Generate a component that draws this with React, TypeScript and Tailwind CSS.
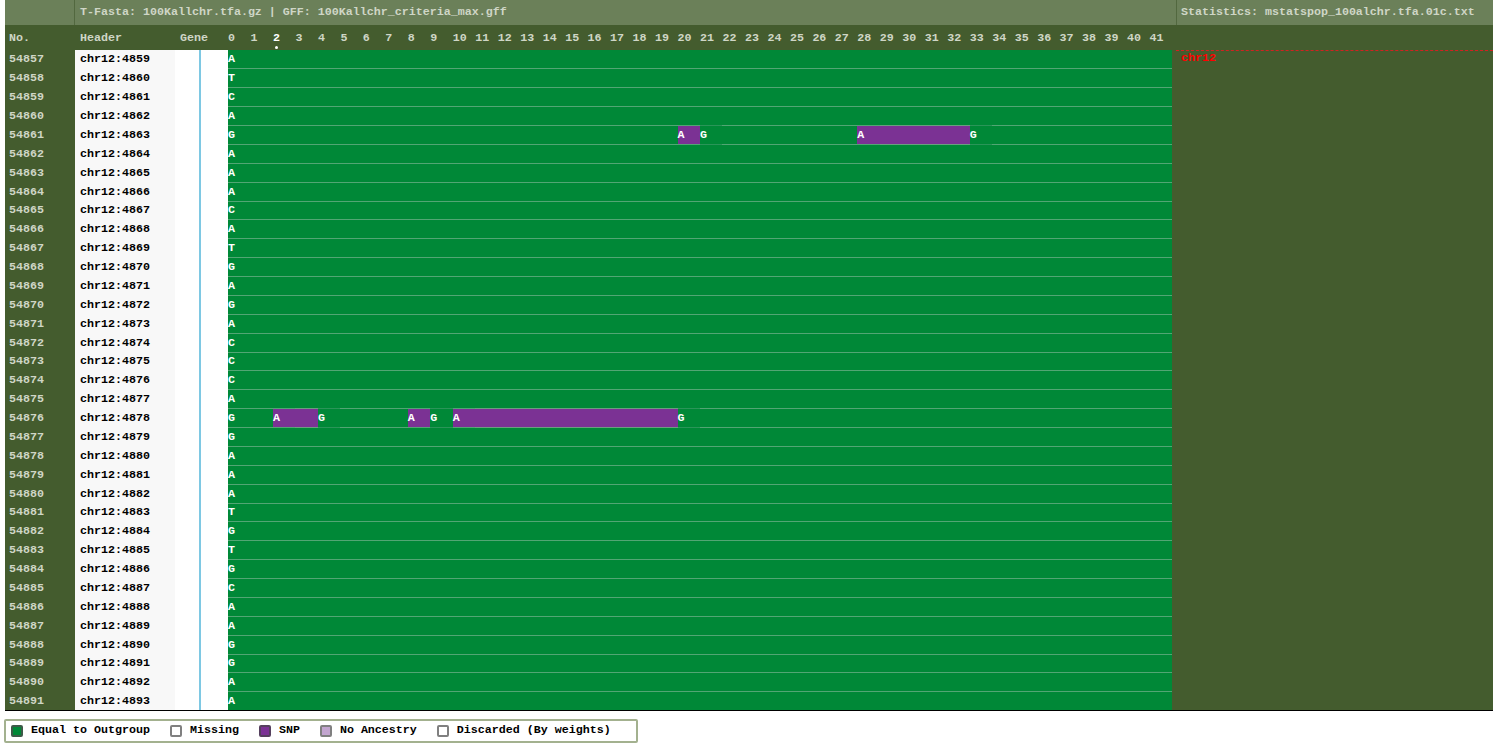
import React from 'react'

const FIRST_NO = 54857
const FIRST_POS = 4859
const BASES = 'ATCAGAAACATGAGACCCAGGAAATGTGCAAGGAA'.split('')
const COLUMNS = Array.from({ length: 42 }, (_, i) => i)

type Segment = { start: number; span: number; letter: string; snp: boolean }

const SEGMENTS: Record<number, Segment[]> = {
	54861: [
		{ start: 20, span: 1, letter: 'A', snp: true },
		{ start: 21, span: 1, letter: 'G', snp: false },
		{ start: 28, span: 5, letter: 'A', snp: true },
		{ start: 33, span: 1, letter: 'G', snp: false },
	],
	54876: [
		{ start: 2, span: 2, letter: 'A', snp: true },
		{ start: 4, span: 1, letter: 'G', snp: false },
		{ start: 8, span: 1, letter: 'A', snp: true },
		{ start: 9, span: 1, letter: 'G', snp: false },
		{ start: 10, span: 10, letter: 'A', snp: true },
		{ start: 20, span: 1, letter: 'G', snp: false },
	],
}

const LEGEND = [
	{ label: 'Equal to Outgroup', swatch: 'bg-[#008837] border-[#3d5a48]' },
	{ label: 'Missing', swatch: 'bg-white border-[#808080]' },
	{ label: 'SNP', swatch: 'bg-[#7b3294] border-[#55405e]' },
	{ label: 'No Ancestry', swatch: 'bg-[#c2a5cf] border-[#808080]' },
	{ label: 'Discarded (By weights)', swatch: 'bg-white border-[#808080]' },
]

const Row: React.FunctionComponent<{ index: number; base: string }> = ({ index, base }) => {
	const no = FIRST_NO + index
	const segments = SEGMENTS[no] || []
	return (
		<div className="flex flex-1 min-h-0 leading-[14px]">
			<div className="w-[70px] pl-[4px] pt-[1px] flex items-center text-[#cfd6c6]">{no}</div>
			<div className="w-[100px] pl-[5px] pt-[1px] flex items-center bg-[#f8f8f8] text-black">
				chr12:{FIRST_POS + index}
			</div>
			<div className="w-[53px] bg-white flex">
				<div className="ml-[24px] w-[2px] bg-[#7ec8e3]" />
			</div>
			<div
				className={`w-[944px] grid grid-cols-[repeat(42,1fr)] bg-[#008837] text-white ${
					index > 0 ? 'border-t border-[#52a674]' : ''
				}`}
			>
				<div className="flex items-center">{base}</div>
				{segments.map(segment => (
					<React.Fragment key={segment.start}>
						<div
							className={`relative flex items-center ${
								segment.snp ? 'bg-[#7b3294]' : 'shadow-[0_-1px_0_#2a9558,0_1px_0_#2a9558]'
							}`}
							style={{ gridColumn: `${segment.start + 1} / span 1` }}
						>
							{segment.letter}
						</div>
						{segment.span > 1 && (
							<div
								className="relative bg-[#7b3294] shadow-[0_-1px_0_#6a9f80,0_1px_0_#6a9f80]"
								style={{ gridColumn: `${segment.start + 2} / span ${segment.span - 1}` }}
							/>
						)}
					</React.Fragment>
				))}
			</div>
		</div>
	)
}

export default function App() {
	return (
		<div className="w-[1500px] h-[750px] bg-white overflow-hidden font-['Liberation_Mono',monospace] font-bold text-[11.67px]">
			<div className="ml-[5px] w-[1488px] h-[711px] flex flex-col bg-[#445c2e] border-b border-black">
				<div className="flex h-[25px] shrink-0 bg-[#6b8059] text-[#cfd6c6]">
					<div className="w-[70px] border-r border-[#52683f]" />
					<div className="w-[1102px] pl-[5px] flex items-center border-r border-[#52683f]">
						T-Fasta: 100Kallchr.tfa.gz | GFF: 100Kallchr_criteria_max.gff
					</div>
					<div className="flex-1 pl-[4px] flex items-center">Statistics: mstatspop_100alchr.tfa.01c.txt</div>
				</div>
				<div className="flex h-[25px] shrink-0 pt-[2px] text-[#cfd6c6]">
					<div className="w-[70px] pl-[4px] flex items-center">No.</div>
					<div className="w-[100px] pl-[5px] flex items-center">Header</div>
					<div className="w-[53px] pl-[5px] flex items-center">Gene</div>
					<div className="w-[944px] grid grid-cols-[repeat(42,1fr)]">
						{COLUMNS.map(col => (
							<div key={col} className={`relative flex items-center ${col === 2 ? 'text-white' : ''}`}>
								{col}
								{col === 2 && (
									<span className="absolute left-[2px] bottom-[1px] w-[3px] h-[3px] rounded-full bg-white" />
								)}
							</div>
						))}
					</div>
				</div>
				<div className="flex flex-1 min-h-0 -mt-[0.5px]">
					<div className="w-[1167px] flex flex-col">
						{BASES.map((base, i) => (
							<Row key={i} index={i} base={base} />
						))}
					</div>
					<div className="flex-1 pl-[5px] ml-[4px] border-t border-dashed border-[#d42020] leading-[14px] text-[#ff0000]">
						chr12
					</div>
				</div>
			</div>
			<div className="ml-[4px] mt-[8px] w-[634px] h-[24px] flex items-center pl-[5px] gap-[20px] bg-white border-2 border-[#a3b18f] rounded-[2px] text-black">
				{LEGEND.map(item => (
					<div key={item.label} className="flex items-center gap-[8px]">
						<span className={`w-[12px] h-[12px] border-2 rounded-[2px] ${item.swatch}`} />
						{item.label}
					</div>
				))}
			</div>
		</div>
	)
}
